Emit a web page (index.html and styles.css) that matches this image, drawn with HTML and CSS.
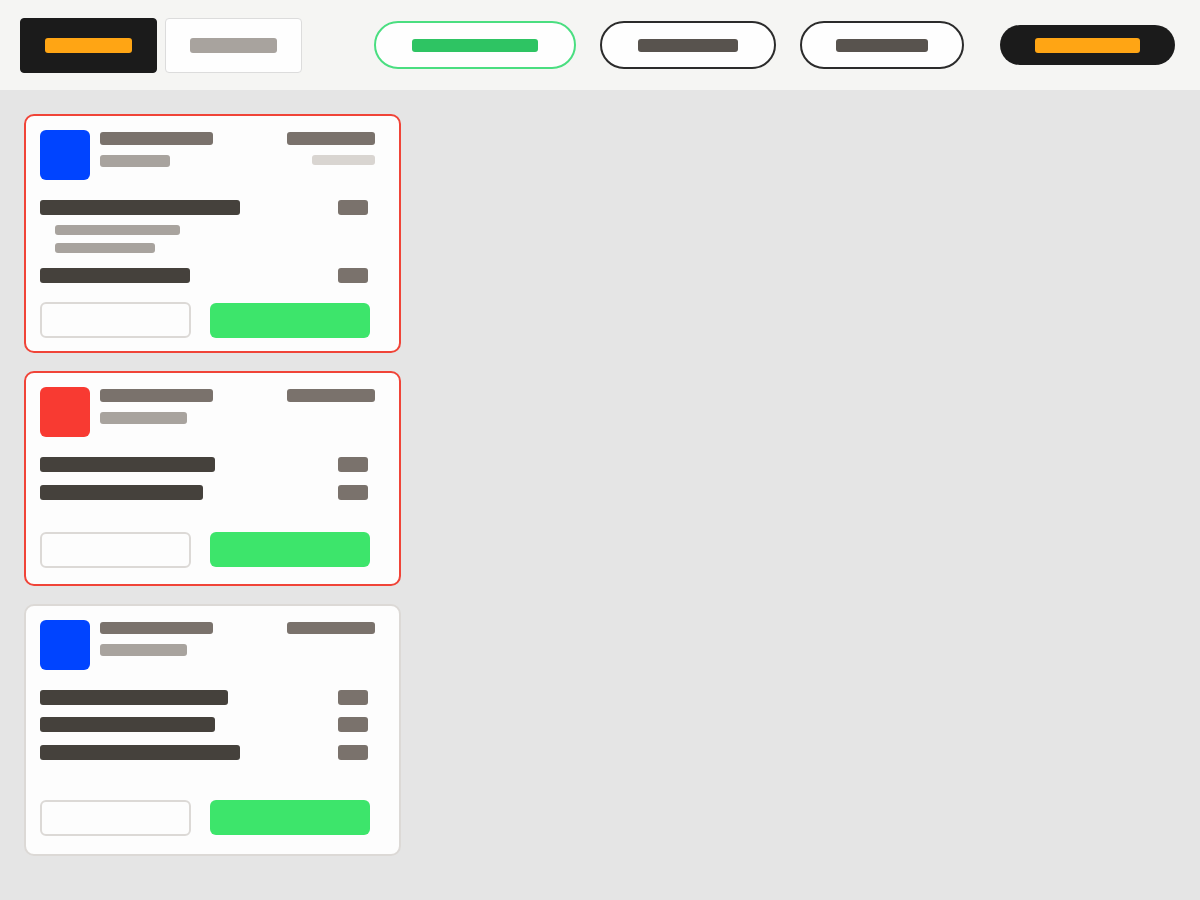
FILE: index.html
```html
<!DOCTYPE html>
<html lang="en">
<head>
<meta charset="utf-8">
<title>Orders</title>
<link rel="stylesheet" href="styles.css">
</head>
<body>
<header class="topbar">
  <div class="tabs">
    <div class="tab tab--active"><span class="bar bar--orange tab-label"></span></div>
    <div class="tab"><span class="bar bar--muted tab-label"></span></div>
  </div>
  <nav class="pills">
    <div class="pill pill--active"><span class="bar bar--green pill-label w126"></span></div>
    <div class="pill"><span class="bar bar--slate pill-label w100"></span></div>
    <div class="pill pill--narrow"><span class="bar bar--slate pill-label w92"></span></div>
  </nav>
  <div class="cta"><span class="bar bar--orange cta-label"></span></div>
</header>

<main class="board">
  <section class="card card--alert card--one">
    <div class="card-head">
      <div class="avatar avatar--blue"></div>
      <div class="head-main">
        <span class="bar bar--title w113"></span>
        <span class="bar bar--sub w70"></span>
      </div>
      <div class="head-side">
        <span class="bar bar--title w88"></span>
        <span class="bar bar--faint w63"></span>
      </div>
    </div>
    <div class="items">
      <div class="item">
        <span class="bar bar--dark w200"></span>
        <span class="bar bar--qty"></span>
      </div>
      <div class="subitems">
        <span class="bar bar--sub sub w125"></span>
        <span class="bar bar--sub sub w100"></span>
      </div>
      <div class="item">
        <span class="bar bar--dark w150"></span>
        <span class="bar bar--qty"></span>
      </div>
    </div>
    <div class="card-foot">
      <div class="btn btn--ghost"></div>
      <div class="btn btn--go"></div>
    </div>
  </section>

  <section class="card card--alert card--two">
    <div class="card-head">
      <div class="avatar avatar--red"></div>
      <div class="head-main">
        <span class="bar bar--title w113"></span>
        <span class="bar bar--sub w87"></span>
      </div>
      <div class="head-side">
        <span class="bar bar--title w88"></span>
      </div>
    </div>
    <div class="items">
      <div class="item">
        <span class="bar bar--dark w175"></span>
        <span class="bar bar--qty"></span>
      </div>
      <div class="item">
        <span class="bar bar--dark w163"></span>
        <span class="bar bar--qty"></span>
      </div>
    </div>
    <div class="card-foot">
      <div class="btn btn--ghost"></div>
      <div class="btn btn--go"></div>
    </div>
  </section>

  <section class="card card--three">
    <div class="card-head">
      <div class="avatar avatar--blue"></div>
      <div class="head-main">
        <span class="bar bar--title w113"></span>
        <span class="bar bar--sub w87"></span>
      </div>
      <div class="head-side">
        <span class="bar bar--title w88"></span>
      </div>
    </div>
    <div class="items">
      <div class="item">
        <span class="bar bar--dark w188"></span>
        <span class="bar bar--qty"></span>
      </div>
      <div class="item">
        <span class="bar bar--dark w175"></span>
        <span class="bar bar--qty"></span>
      </div>
      <div class="item">
        <span class="bar bar--dark w200"></span>
        <span class="bar bar--qty"></span>
      </div>
    </div>
    <div class="card-foot">
      <div class="btn btn--ghost"></div>
      <div class="btn btn--go"></div>
    </div>
  </section>
</main>
</body>
</html>
```

FILE: styles.css
```css
* { box-sizing: border-box; }

html, body {
  margin: 0;
  padding: 0;
  background: #e5e5e5;
  font-family: "Liberation Sans", Arial, sans-serif;
}

body { min-height: 900px; }

.bar {
  display: block;
  border-radius: 3px;
  flex: none;
}

.bar--orange { background: #ffa514; }
.bar--muted  { background: #a8a39e; }
.bar--green  { background: #2ec463; }
.bar--slate  { background: #58534e; }
.bar--title  { background: #7a726c; height: 12.5px; }
.bar--sub    { background: #a8a39e; height: 12px; }
.bar--faint  { background: #d9d5d1; height: 10px; }
.bar--dark   { background: #45413c; height: 15px; }
.bar--qty    { background: #7a726c; height: 15px; width: 30px; }

.w63 { width: 63px; }
.w70 { width: 70px; }
.w87 { width: 87px; }
.w88 { width: 88px; }
.w92 { width: 92px; }
.w100 { width: 100px; }
.w113 { width: 113px; }
.w125 { width: 125px; }
.w126 { width: 126px; }
.w150 { width: 150px; }
.w163 { width: 163px; }
.w175 { width: 175px; }
.w188 { width: 188px; }
.w200 { width: 200px; }

/* ---------- top bar ---------- */
.topbar {
  height: 90px;
  background: #f5f5f3;
  display: flex;
  align-items: center;
  padding: 0 25px 0 20px;
}

.tabs {
  display: flex;
  gap: 8px;
}

.tab {
  width: 137px;
  height: 55px;
  border: 1px solid #dcdcdc;
  border-radius: 4px;
  background: #fefefe;
  display: flex;
  align-items: center;
  justify-content: center;
}

.tab--active {
  background: #1b1b1b;
  border-color: #1b1b1b;
}

.tab-label { width: 87px; height: 15px; }

.pills {
  display: flex;
  gap: 24px;
  margin-left: 72px;
}

.pill {
  height: 48px;
  padding: 0 36px;
  border: 2px solid #2b2b2b;
  border-radius: 24px;
  background: #fefefe;
  display: flex;
  align-items: center;
}

.pill--narrow { padding: 0 34px; }

.pill--active { border-color: #4ade80; }

.pill-label { height: 13px; }

.cta {
  margin-left: auto;
  width: 175px;
  height: 40px;
  border-radius: 20px;
  background: #1b1b1b;
  display: flex;
  align-items: center;
  justify-content: center;
}

.cta-label { width: 105px; height: 15px; }

/* ---------- board ---------- */
.board {
  padding: 24px 0 0 24px;
  display: flex;
  flex-direction: column;
  gap: 18px;
}

.card {
  width: 377px;
  background: #fdfdfd;
  border: 2px solid #dcd9d6;
  border-radius: 10px;
  padding: 14px 14px 13px;
}

.card--alert { border-color: #f04438; }

.card-head {
  display: flex;
  padding-right: 10px;
}

.avatar {
  width: 50px;
  height: 50px;
  border-radius: 6px;
  flex: none;
}

.avatar--blue { background: #0044ff; }
.avatar--red  { background: #f83a32; }

.head-main {
  display: flex;
  flex-direction: column;
  gap: 10px;
  margin-left: 10px;
  padding-top: 2px;
}

.head-side {
  margin-left: auto;
  display: flex;
  flex-direction: column;
  align-items: flex-end;
  gap: 10px;
  padding-top: 2px;
}

.items {
  margin-top: 20px;
  padding-right: 17px;
  display: flex;
  flex-direction: column;
  gap: 12.5px;
}

.item {
  display: flex;
  justify-content: space-between;
}

.subitems {
  display: flex;
  flex-direction: column;
  gap: 8px;
  padding-left: 15px;
  margin: -2.5px 0 2.5px;
}

.sub { height: 10px; }

.card-foot {
  display: grid;
  grid-template-columns: 151px 160px;
  column-gap: 19px;
  align-items: center;
}

.btn { border-radius: 6px; }

.btn--ghost {
  height: 36px;
  border: 2px solid #dcd9d6;
  background: #fdfdfd;
}

.btn--go {
  height: 35px;
  background: #3de56b;
}

.card--one .card-foot   { margin-top: 19px; }
.card--two .card-foot   { margin-top: 32px; }
.card--two              { padding-bottom: 16px; }
.card--three .card-foot { margin-top: 40px; }
.card--three            { padding-bottom: 18px; }
```
